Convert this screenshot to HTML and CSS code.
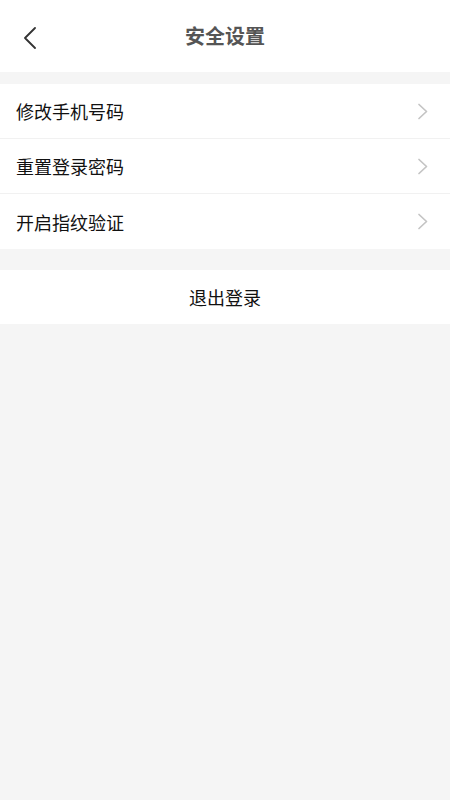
FILE: index.html
```html
<!DOCTYPE html>
<html lang="zh-CN">
<head>
<meta charset="utf-8">
<link rel="stylesheet" href="styles.css">
</head>
<body>
<div class="page">
  <header class="nav">
    <span class="back">
      <svg width="14" height="22" viewBox="0 0 14 22"><path d="M12 1 L2 11 L12 21" fill="none" stroke="#333" stroke-width="1.8" stroke-linecap="round" stroke-linejoin="round"/></svg>
    </span>
    <h1 class="title">安全设置</h1>
  </header>
  <section class="group">
    <div class="row"><span class="label">修改手机号码</span><svg class="chev" width="12" height="17" viewBox="0 0 12 17"><path d="M2 1.5 L9.5 8.5 L2 15.5" fill="none" stroke="#c4c4c4" stroke-width="1.7" stroke-linecap="round" stroke-linejoin="round"/></svg></div>
    <div class="row"><span class="label">重置登录密码</span><svg class="chev" width="12" height="17" viewBox="0 0 12 17"><path d="M2 1.5 L9.5 8.5 L2 15.5" fill="none" stroke="#c4c4c4" stroke-width="1.7" stroke-linecap="round" stroke-linejoin="round"/></svg></div>
    <div class="row"><span class="label">开启指纹验证</span><svg class="chev" width="12" height="17" viewBox="0 0 12 17"><path d="M2 1.5 L9.5 8.5 L2 15.5" fill="none" stroke="#c4c4c4" stroke-width="1.7" stroke-linecap="round" stroke-linejoin="round"/></svg></div>
  </section>
  <section class="logout">退出登录</section>
</div>
</body>
</html>
```

FILE: styles.css
```css
html, body {
  margin: 0;
  padding: 0;
  background: #f5f5f5;
  font-family: "Noto Sans CJK SC", "Noto Sans", sans-serif;
}
.page {
  width: 450px;
  min-height: 800px;
  background: #f5f5f5;
}
.nav {
  height: 72px;
  background: #fff;
  display: flex;
  align-items: center;
  justify-content: center;
  position: relative;
}
.back {
  position: absolute;
  left: 23px;
  top: 27px;
  display: flex;
}
.title {
  margin: 0;
  font-size: 20px;
  font-weight: 700;
  color: #555;
  line-height: 1;
}
.group {
  margin-top: 12px;
  background: #fff;
}
.row {
  height: 55px;
  display: flex;
  align-items: center;
  justify-content: space-between;
  padding: 0 21px 0 16px;
  border-bottom: 1px solid #f1f1f1;
  box-sizing: border-box;
}
.row:last-child { border-bottom: none; }
.label {
  font-size: 18px;
  color: #111;
  line-height: 1;
}
.chev { display: block; }
.logout {
  margin-top: 21px;
  height: 54px;
  background: #fff;
  display: flex;
  align-items: center;
  justify-content: center;
  font-size: 18px;
  color: #111;
}
```
